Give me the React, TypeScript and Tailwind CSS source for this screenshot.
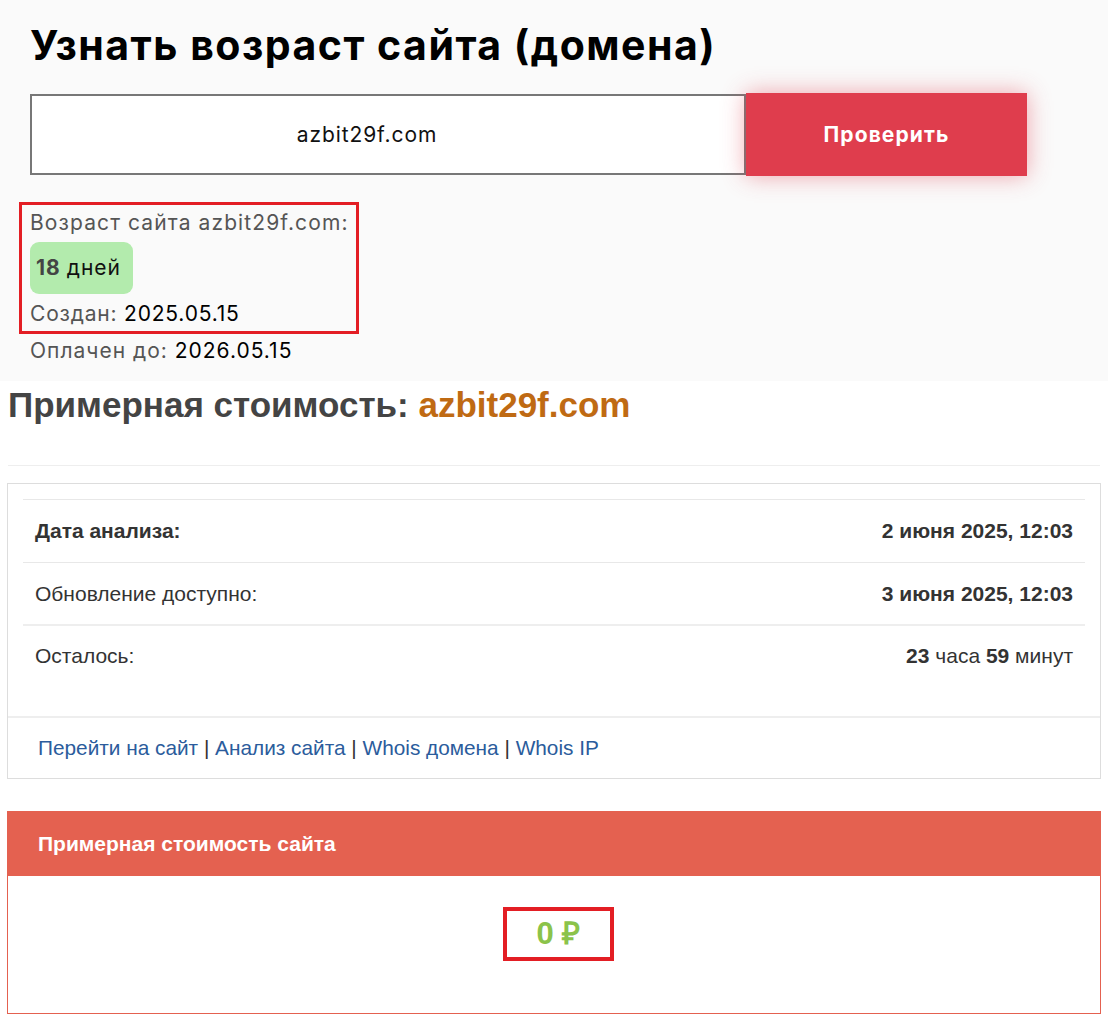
import React from "react";

const mont = { fontFamily: "Inter, 'Noto Sans', sans-serif" } as React.CSSProperties;

function Row({ label, value, bold, h }: { label: string; value: React.ReactNode; bold?: boolean; h: string }) {
  return (
    <div className={`flex items-center justify-between ${h} px-3 border-t border-[#e8e8e8]`}>
      <span className={`text-[21px] text-[#333] ${bold ? "font-bold" : ""}`}>{label}</span>
      <span className="text-[21px] text-[#333]">{value}</span>
    </div>
  );
}

export default function App() {
  return (
    <div className="w-[1108px] min-h-[1028px] bg-white">
      <div className="bg-[#fafafa] pt-[20px] pb-[14px]" style={mont}>
        <h1 className="ml-[30px] text-[41px] font-bold leading-[50px] text-black tracking-[1.5px]">
          Узнать возраст сайта (домена)
        </h1>
        <div className="mt-[24px] ml-[30px] flex items-stretch">
          <div className="w-[716px] h-[81px] border-2 border-[#777] bg-white flex items-center justify-center pr-[42px] text-[21px] tracking-[0.9px] text-[#111]">
            azbit29f.com
          </div>
          <button className="w-[281px] h-[83px] -mt-[1px] bg-[#df3d4d] text-white text-[21px] font-bold tracking-[1.1px] shadow-[0_0_22px_rgba(223,61,77,0.45)]">
            Проверить
          </button>
        </div>
        <div className="mt-[26px] ml-[19px] w-[340px] border-[3px] border-[#e31e24] pl-[8px] pt-[2px] pb-[1px]">
          <div className="h-[32px] flex items-center text-[21px] tracking-[1.1px] text-[#555]">Возраст сайта azbit29f.com:</div>
          <div className="mt-[3px] h-[52px] w-[103px] rounded-[9px] bg-[#b3ebad] flex items-center pl-[6px] text-[21px] tracking-[1px]">
            <span className="font-bold text-[#444]">18</span>
            <span className="ml-[6px] text-[#111]">дней</span>
          </div>
          <div className="mt-[4px] h-[32px] flex items-center text-[21px] tracking-[0.8px] text-[#555]">
            Создан:&nbsp;<span className="text-black">2025.05.15</span>
          </div>
        </div>
        <div className="ml-[30px] mt-[1px] h-[32px] flex items-center text-[21px] tracking-[1px] text-[#555]">
          Оплачен до:&nbsp;<span className="text-black">2026.05.15</span>
        </div>
      </div>

      <div style={{ fontFamily: "'Liberation Sans', Arial, sans-serif" }}>
        <h2 className="ml-[8px] mt-[4px] text-[35px] font-bold leading-[40px] text-[#444]">
          Примерная стоимость: <span className="text-[#bf6a13]">azbit29f.com</span>
        </h2>
        <div className="mx-[8px] mt-[40px] border-t border-[#eee]"></div>
        <div className="mx-[7px] mt-[17px] border border-[#ddd] bg-white">
          <div className="px-[15px] pt-[15px] pb-[30px]">
            <Row h="h-[63px]" label="Дата анализа:" bold value={<b>2 июня 2025, 12:03</b>} />
            <Row h="h-[62px]" label="Обновление доступно:" value={<b>3 июня 2025, 12:03</b>} />
            <div className="flex items-center justify-between h-[62px] px-3 border-t-2 border-[#eee]">
              <span className="text-[21px] text-[#333]">Осталось:</span>
              <span className="text-[21px] text-[#333]">
                <b>23</b> часа <b>59</b> минут
              </span>
            </div>
          </div>
          <div className="border-t-2 border-[#eee] h-[62px] flex items-center pl-[30px] text-[20.8px] text-[#333]">
            <a className="text-[#2b5c9c]">Перейти на сайт</a>&nbsp;|&nbsp;
            <a className="text-[#2b5c9c]">Анализ сайта</a>&nbsp;|&nbsp;
            <a className="text-[#2b5c9c]">Whois домена</a>&nbsp;|&nbsp;
            <a className="text-[#2b5c9c]">Whois IP</a>
          </div>
        </div>
        <div className="mx-[7px] mt-[32px] border border-[#e46150] bg-white">
          <div className="h-[64px] bg-[#e46150] flex items-center pl-[30px] text-[21px] font-bold text-white">
            Примерная стоимость сайта
          </div>
          <div className="h-[137px] flex items-start justify-center pt-[31px]">
            <div className="ml-[9px] border-[4px] border-[#e31e24] w-[111px] h-[54px] flex items-center justify-center text-[31px] font-bold text-[#8bc34a]">
              0 ₽
            </div>
          </div>
        </div>
      </div>
    </div>
  );
}
